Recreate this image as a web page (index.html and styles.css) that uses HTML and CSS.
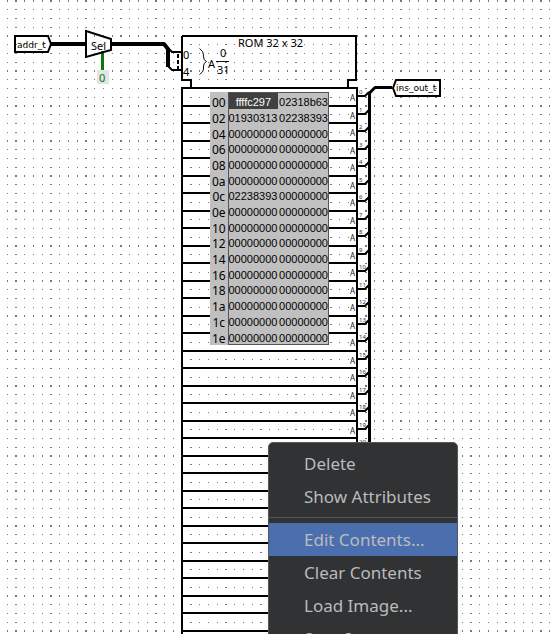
FILE: index.html
```html
<!DOCTYPE html>
<html lang="en">
<head>
<meta charset="utf-8">
<title>Circuit editor</title>
<link rel="stylesheet" href="styles.css">
</head>
<body>
<main class="canvas">
  <svg class="circuit" aria-label="ROM circuit">
    <defs>
      <pattern id="grid" width="35" height="35" patternUnits="userSpaceOnUse">
        <path class="dots" d="M7 0h1v2h-1zM15 0h2v2h-2zM24 0h1v2h-1zM33 0h1v2h-1zM7 9h1v1h-1zM15 9h2v1h-2zM24 9h1v1h-1zM33 9h1v1h-1zM7 18h1v1h-1zM15 18h2v1h-2zM24 18h1v1h-1zM33 18h1v1h-1zM7 27h1v1h-1zM15 27h2v1h-2zM24 27h1v1h-1zM33 27h1v1h-1z"/>
      </pattern>
    </defs>
    <rect width="100%" height="100%" fill="url(#grid)"/>

    <path class="bus" d="M50 44H86M111 44H164L168 49V67"/>
    <path class="bus bus-out" d="M392 87.500H375L369.500 93V2000"/>
    <path class="select-wire" d="M102.500 51V71"/>

    <path class="part" d="M15 36H48L51 44L48 52H15Z"/>
    <text class="pin" x="17" y="48">addr_t</text>
    <path class="part" d="M86 31L111 39V50L86 57Z"/>
    <text class="label" x="91" y="50">Sel</text>
    <rect class="constant" x="97" y="70" width="12" height="14"/>
    <text class="label constant-value" x="99" y="82">0</text>
    <path class="part" d="M393 88L396 80H440V96H396Z"/>
    <text class="pin" x="396" y="91">ins_out_t</text>

    <path class="part" d="M168 48L172 52H181M168 66L172 70H181"/>
    <path class="part dashed" d="M178 54V70"/>

    <path class="part" d="M182 36H356V80H348V87M182 36V80H191V87M182 2000V88H357V2000"/>
    <text class="label" x="238" y="47">ROM 32 x 32</text>
    <text class="label" x="183" y="59">0</text>
    <text class="label" x="183" y="76">4</text>
    <path class="thin" d="M199.500 48.500Q203.500 51 203.500 55V57Q203.500 60 206.500 61.500Q203.500 63 203.500 66V69Q203.500 72 199.500 74.500M216 61.500H229"/>
    <text class="label" x="208" y="68">A</text>
    <text class="label" x="220" y="57">0</text>
    <text class="label" x="217" y="74">31</text>
    <g id="rows"></g>
  </svg>

  <table class="memory" aria-label="ROM contents">
    <tbody>
      <tr><th scope="row">00</th><td class="current">ffffc297</td><td>02318b63</td></tr>
      <tr><th scope="row">02</th><td>01930313</td><td>02238393</td></tr>
      <tr><th scope="row">04</th><td>00000000</td><td>00000000</td></tr>
      <tr><th scope="row">06</th><td>00000000</td><td>00000000</td></tr>
      <tr><th scope="row">08</th><td>00000000</td><td>00000000</td></tr>
      <tr><th scope="row">0a</th><td>00000000</td><td>00000000</td></tr>
      <tr><th scope="row">0c</th><td>02238393</td><td>00000000</td></tr>
      <tr><th scope="row">0e</th><td>00000000</td><td>00000000</td></tr>
      <tr><th scope="row">10</th><td>00000000</td><td>00000000</td></tr>
      <tr><th scope="row">12</th><td>00000000</td><td>00000000</td></tr>
      <tr><th scope="row">14</th><td>00000000</td><td>00000000</td></tr>
      <tr><th scope="row">16</th><td>00000000</td><td>00000000</td></tr>
      <tr><th scope="row">18</th><td>00000000</td><td>00000000</td></tr>
      <tr><th scope="row">1a</th><td>00000000</td><td>00000000</td></tr>
      <tr><th scope="row">1c</th><td>00000000</td><td>00000000</td></tr>
      <tr><th scope="row">1e</th><td>00000000</td><td>00000000</td></tr>
    </tbody>
  </table>

  <div class="menu" role="menu">
    <button type="button" role="menuitem">Delete</button>
    <button type="button" role="menuitem">Show Attributes</button>
    <hr>
    <button type="button" role="menuitem" class="active">Edit Contents...</button>
    <button type="button" role="menuitem">Clear Contents</button>
    <button type="button" role="menuitem">Load Image...</button>
    <button type="button" role="menuitem">Save Image...</button>
  </div>
</main>
<script src="rows.js"></script>
</body>
</html>
```
FILE: styles.css
```css
* { box-sizing: border-box; }

body {
  margin: 0;
  background: #fff;
  font-family: "Noto Sans", "Open Sans", sans-serif;
}

.canvas {
  position: relative;
  height: 100vh;
  overflow: hidden;
}

.circuit {
  display: block;
  width: 100%;
  height: 100%;
}

.dots { fill: #777; }

.bus {
  fill: none;
  stroke: #000;
  stroke-width: 4;
  stroke-linejoin: round;
}

.bus-out { stroke-width: 3; }

.part {
  fill: none;
  stroke: #000;
  stroke-width: 2;
}

.dashed { stroke-dasharray: 4 2; }

.thin {
  fill: none;
  stroke: #111;
  stroke-width: 1;
}

.select-wire {
  stroke: #0b780b;
  stroke-width: 3;
}

.constant { fill: #e4e4e4; }

.label { font-size: 11px; }

.constant-value { fill: #0b780b; }

.pin {
  font-family: "DejaVu Sans", sans-serif;
  font-size: 9px;
}

.port {
  font-size: 8px;
  fill: #222;
}

.bit {
  font-size: 6px;
  fill: #333;
}

.memory {
  position: absolute;
  left: 210px;
  top: 92px;
  width: 119px;
  height: 253px;
  border-collapse: collapse;
  table-layout: fixed;
  background: #c0c0c0;
  line-height: 11px;
}

.memory th,
.memory td {
  padding: 4px 0 0;
  font-weight: 400;
}

.memory td {
  font-family: "Liberation Sans", sans-serif;
  font-size: 11px;
  text-align: right;
}

.memory th + td { text-align: left; }

.memory th {
  width: 18px;
  border-right: 1px solid #555;
  font-size: 12px;
  text-align: center;
}

.memory tr { border-right: 1px solid #555; }

.memory tr:first-child td { border-top: 1px solid #555; }

.memory tr:last-child td { border-bottom: 1px solid #555; }

.memory .current {
  background: #404040;
  color: #fff;
  text-align: center;
}

.menu {
  position: absolute;
  left: 268px;
  top: 442px;
  width: 190px;
  padding: 4px 0;
  border: 1px solid #55585a;
  border-radius: 5px;
  background: #303234;
  box-shadow: 0 2px 8px rgb(0 0 0 / 6%);
}

.menu button {
  display: block;
  width: 100%;
  height: 33px;
  padding: 0 0 0 35px;
  border: 0;
  background: none;
  color: #bbb;
  font-family: inherit;
  font-size: 17px;
  line-height: 33px;
  text-align: left;
}

.menu .active { background: #4b6eaf; }

.menu hr {
  height: 1px;
  margin: 4px 0 5px;
  border: 0;
  background: #555;
}
```
FILE: rows.js
```javascript
const rows = document.getElementById("rows");
const pitch = 17.5;
const labelledBits = 21;
let markup = "";

for (let bit = 0; bit < 32; bit++) {
  const divider = Math.round(88 + pitch * bit);
  const port = Math.round(96 + pitch * bit);
  markup += `<path class="part" d="M182 ${divider}H357M357 ${port}H365L369 ${port - 4}"/>`;
  if (bit < labelledBits) {
    markup += `<text class="bit" x="359" y="${port - 2}">${bit}</text>`;
  }
  if (bit < labelledBits - 1) {
    markup += `<text class="port" x="350" y="${port + 5}">A</text>`;
  }
}

rows.innerHTML = markup;
```
